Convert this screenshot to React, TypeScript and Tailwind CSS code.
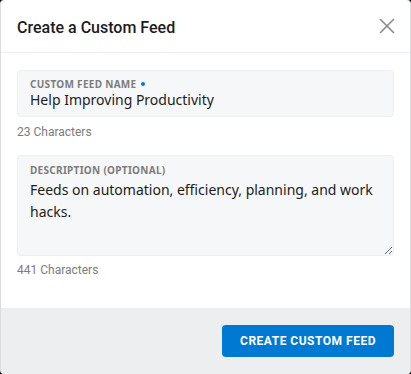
import { X } from 'lucide-react';

const plex = { fontFamily: 'Roboto, "Noto Sans", sans-serif' };
const noto = { fontFamily: '"Noto Sans", sans-serif' };

export default function App() {
  return (
    <div className="h-[374px] w-[411px] bg-black">
      <div className="flex h-full flex-col overflow-hidden rounded-[4px] border-x border-[#dadcde] bg-white">
        <div className="flex h-[53px] shrink-0 items-center justify-between border-b border-[#edeff1] pl-[16px] pr-[10px]">
          <h1 className="mt-[3px] text-[16px] font-medium text-[#1c1c1c]" style={plex}>
            Create a Custom Feed
          </h1>
          <X className="mb-[1px] h-[26px] w-[26px] text-[#878a8c]" strokeWidth={1.5} />
        </div>

        <div className="flex flex-1 flex-col px-[16px] pt-[17px]">
          <div className="flex h-[47px] flex-col justify-center rounded-[4px] border border-[#edeff1] bg-[#f6f7f8] px-[12px]">
            <div className="flex items-center gap-[4px] text-[10px] font-bold uppercase leading-[12px] tracking-[0.3px] text-[#7c7c7c]" style={noto}>
              Custom Feed Name
              <span className="h-[4px] w-[4px] rounded-full bg-[#0079d3]" />
            </div>
            <div className="text-[14px] leading-[20px] text-[#1c1c1c]" style={noto}>
              Help Improving Productivity
            </div>
          </div>
          <div className="mt-[7px] text-[12px] leading-[16px] text-[#7c7c7c]" style={plex}>
            23 Characters
          </div>

          <div className="relative mt-[15px]">
            <label className="absolute left-[13px] top-[9px] text-[10px] font-bold uppercase leading-[12px] tracking-[0.3px] text-[#7c7c7c]" style={noto}>
              Description (optional)
            </label>
            <textarea
              className="block h-[101px] w-full resize-y rounded-[4px] border border-[#edeff1] bg-[#f6f7f8] px-[12px] pt-[23px] text-[14px] leading-[22px] text-[#1c1c1c] outline-none"
              style={noto}
              defaultValue="Feeds on automation, efficiency, planning, and work hacks."
            />
          </div>
          <div className="mt-[6px] text-[12px] leading-[16px] text-[#7c7c7c]" style={plex}>
            441 Characters
          </div>
        </div>

        <div className="flex h-[66px] shrink-0 items-center justify-end bg-[#edeef0] px-[16px]">
          <button
            type="button"
            className="h-[32px] w-[172px] rounded-[4px] bg-[#0079d3] text-[12px] font-bold uppercase tracking-[0.5px] text-white"
            style={plex}
          >
            Create Custom Feed
          </button>
        </div>
      </div>
    </div>
  );
}
